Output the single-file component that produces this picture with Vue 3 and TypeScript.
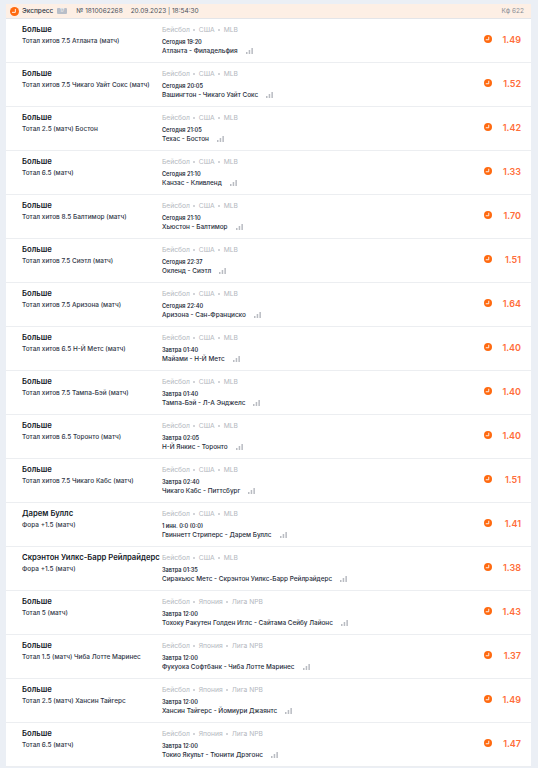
<script setup lang="ts">
interface Bet {
  title: string
  market: string
  country: string
  league: string
  time: string
  teams: string
  odds: string
}

const usa = { country: 'США', league: 'MLB' }
const japan = { country: 'Япония', league: 'Лига NPB' }

const bets: Bet[] = [
  { title: 'Больше', market: 'Тотал хитов 7.5 Атланта (матч)', ...usa, time: 'Сегодня 19:20', teams: 'Атланта - Филадельфия', odds: '1.49' },
  { title: 'Больше', market: 'Тотал хитов 7.5 Чикаго Уайт Сокс (матч)', ...usa, time: 'Сегодня 20:05', teams: 'Вашингтон - Чикаго Уайт Сокс', odds: '1.52' },
  { title: 'Больше', market: 'Тотал 2.5 (матч) Бостон', ...usa, time: 'Сегодня 21:05', teams: 'Техас - Бостон', odds: '1.42' },
  { title: 'Больше', market: 'Тотал 6.5 (матч)', ...usa, time: 'Сегодня 21:10', teams: 'Канзас - Кливленд', odds: '1.33' },
  { title: 'Больше', market: 'Тотал хитов 8.5 Балтимор (матч)', ...usa, time: 'Сегодня 21:10', teams: 'Хьюстон - Балтимор', odds: '1.70' },
  { title: 'Больше', market: 'Тотал хитов 7.5 Сиэтл (матч)', ...usa, time: 'Сегодня 22:37', teams: 'Окленд - Сиэтл', odds: '1.51' },
  { title: 'Больше', market: 'Тотал хитов 7.5 Аризона (матч)', ...usa, time: 'Сегодня 22:40', teams: 'Аризона - Сан-Франциско', odds: '1.64' },
  { title: 'Больше', market: 'Тотал хитов 6.5 Н-Й Метс (матч)', ...usa, time: 'Завтра 01:40', teams: 'Майами - Н-Й Метс', odds: '1.40' },
  { title: 'Больше', market: 'Тотал хитов 7.5 Тампа-Бэй (матч)', ...usa, time: 'Завтра 01:40', teams: 'Тампа-Бэй - Л-А Энджелс', odds: '1.40' },
  { title: 'Больше', market: 'Тотал хитов 6.5 Торонто (матч)', ...usa, time: 'Завтра 02:05', teams: 'Н-Й Янкис - Торонто', odds: '1.40' },
  { title: 'Больше', market: 'Тотал хитов 7.5 Чикаго Кабс (матч)', ...usa, time: 'Завтра 02:40', teams: 'Чикаго Кабс - Питтсбург', odds: '1.51' },
  { title: 'Дарем Буллс', market: 'Фора +1.5 (матч)', ...usa, time: '1 инн. 0:0 (0:0)', teams: 'Гвиннетт Стриперс - Дарем Буллс', odds: '1.41' },
  { title: 'Скрэнтон Уилкс-Барр Рейлрайдерс', market: 'Фора +1.5 (матч)', ...usa, time: 'Завтра 01:35', teams: 'Сиракьюс Метс - Скрэнтон Уилкс-Барр Рейлрайдерс', odds: '1.38' },
  { title: 'Больше', market: 'Тотал 5 (матч)', ...japan, time: 'Завтра 12:00', teams: 'Тохоку Ракутен Голден Иглс - Сайтама Сейбу Лайонс', odds: '1.43' },
  { title: 'Больше', market: 'Тотал 1.5 (матч) Чиба Лотте Маринес', ...japan, time: 'Завтра 12:00', teams: 'Фукуока Софтбанк - Чиба Лотте Маринес', odds: '1.37' },
  { title: 'Больше', market: 'Тотал 2.5 (матч) Хансин Тайгерс', ...japan, time: 'Завтра 12:00', teams: 'Хансин Тайгерс - Йомиури Джаянтс', odds: '1.49' },
  { title: 'Больше', market: 'Тотал 6.5 (матч)', ...japan, time: 'Завтра 12:00', teams: 'Токио Якульт - Тюнити Дрэгонс', odds: '1.47' },
]
</script>

<template>
  <div class="page">
    <div class="card">
      <header class="head">
        <svg class="ball" viewBox="0 0 16 16" width="9" height="9">
          <circle cx="8" cy="8" r="8" fill="#ff6a10" />
          <path d="M9.5 3.5v6h-6" fill="none" stroke="#fff" stroke-width="1.6" />
        </svg>
        <span class="kind">Экспресс</span>
        <span class="count">17</span>
        <span class="num">№ 1810062268</span>
        <span class="date">20.09.2023 | 18:54:30</span>
        <span class="total">Кф 622</span>
      </header>
      <div v-for="(bet, i) in bets" :key="i" class="row">
        <div class="left">
          <div class="title">{{ bet.title }}</div>
          <div class="market">{{ bet.market }}</div>
        </div>
        <div class="mid">
          <div class="crumbs">
            <span>Бейсбол</span><i></i><span>{{ bet.country }}</span><i></i><span>{{ bet.league }}</span>
          </div>
          <div class="time">{{ bet.time }}</div>
          <div class="teams">
            <span>{{ bet.teams }}</span>
            <svg class="bars" viewBox="0 0 7 6" width="7" height="6">
              <rect x="0" y="4" width="1.5" height="2" fill="#b9bcc2" />
              <rect x="2.7" y="2" width="1.5" height="4" fill="#b9bcc2" />
              <rect x="5.4" y="0" width="1.5" height="6" fill="#b9bcc2" />
            </svg>
          </div>
        </div>
        <svg class="ball small" viewBox="0 0 16 16" width="8" height="8">
          <circle cx="8" cy="8" r="8" fill="#ff6a10" />
          <path d="M9.5 3.5v6h-6" fill="none" stroke="#fff" stroke-width="1.8" />
        </svg>
        <div class="odds">{{ bet.odds }}</div>
      </div>
    </div>
  </div>
</template>

<style>
html,
body {
  margin: 0;
  background: #ebeff5;
  overflow: hidden;
}
</style>

<style scoped>
.page {
  height: 768px;
  padding: 4px 7px 0 6px;
  box-sizing: border-box;
  overflow: hidden;
  font-family: Inter, "Noto Sans", sans-serif;
  color: #1d2433;
}

.card {
  background: #fff;
  border-radius: 3px 3px 0 0;
}

.head {
  display: flex;
  align-items: center;
  height: 14px;
  padding: 0 7px 0 4px;
  background: #fdefe5;
  border-bottom: 1px solid #e3e5e9;
  font-size: 6.5px;
  color: #4a505c;
}

.kind {
  margin-left: 3px;
  font-weight: 500;
  color: #2c3342;
}

.count {
  margin-left: 4px;
  width: 10px;
  height: 6px;
  line-height: 6px;
  border-radius: 1px;
  background: #b8bec8;
  color: #fff;
  font-size: 4.5px;
  text-align: center;
}

.num {
  margin-left: 9px;
}

.date {
  margin-left: 8px;
}

.total {
  margin-left: auto;
  color: #888c94;
}

.row {
  display: flex;
  align-items: flex-start;
  height: 44px;
  box-sizing: border-box;
  padding: 6px 10px 0 16px;
  border-bottom: 1px solid #eceef1;
}

.left {
  width: 140px;
  flex: none;
  white-space: nowrap;
}

.title {
  font-size: 7.7px;
  font-weight: 600;
  line-height: 10px;
  color: #141a28;
}

.market {
  margin-top: 2px;
  font-size: 6.45px;
  font-weight: 500;
  line-height: 9px;
  color: #2f3646;
}

.mid {
  flex: 1;
  min-width: 0;
  white-space: nowrap;
}

.crumbs {
  display: flex;
  align-items: center;
  font-size: 6.7px;
  line-height: 10px;
  color: #b3b7be;
}

.crumbs i {
  width: 2px;
  height: 2px;
  margin: 0 3.5px;
  background: #c4c7cd;
  border-radius: 50%;
}

.time {
  margin-top: 3px;
  font-size: 5.6px;
  font-weight: 600;
  line-height: 8px;
  color: #262c3a;
}

.teams {
  display: flex;
  align-items: center;
  font-size: 6.4px;
  font-weight: 500;
  line-height: 10px;
  color: #262c3a;
}

.bars {
  margin-left: 8px;
}

.ball {
  flex: none;
}

.small {
  margin-top: 10px;
}

.odds {
  width: 29px;
  margin-top: 8.5px;
  font-size: 9px;
  font-weight: 600;
  line-height: 11px;
  text-align: right;
  color: #ff6d3a;
}
</style>
